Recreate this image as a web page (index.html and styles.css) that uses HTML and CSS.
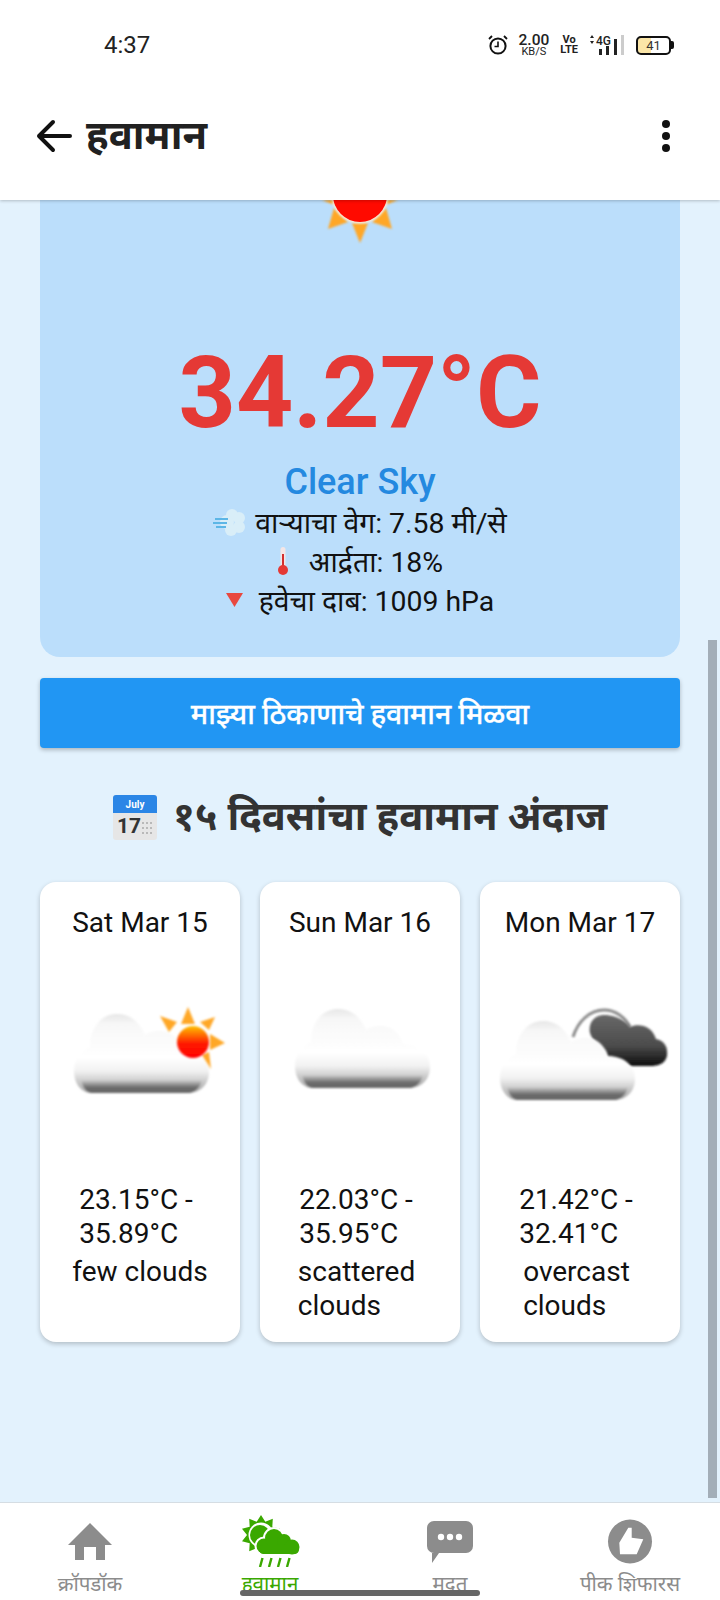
FILE: index.html
```html
<!DOCTYPE html>
<html lang="mr">
<head>
<meta charset="utf-8">
<title>हवामान</title>
<link rel="stylesheet" href="styles.css">
</head>
<body>
<svg class="defs" width="0" height="0">
  <defs>
    <linearGradient id="cloudGrad" x1="0" y1="0" x2="0" y2="1">
      <stop offset="0" stop-color="#e6e6e6"/>
      <stop offset="0.12" stop-color="#f7f7f7"/>
      <stop offset="0.55" stop-color="#ffffff"/>
      <stop offset="0.72" stop-color="#f2f2f2"/>
      <stop offset="0.88" stop-color="#c4c4c4"/>
      <stop offset="1" stop-color="#a8a8a8"/>
    </linearGradient>
    <linearGradient id="cloudBase" x1="0" y1="0" x2="0" y2="1">
      <stop offset="0" stop-color="#777" stop-opacity="0"/>
      <stop offset="0.6" stop-color="#6a6a6a"/>
      <stop offset="1" stop-color="#666"/>
    </linearGradient>
    <linearGradient id="darkGrad" x1="0" y1="0" x2="0" y2="1">
      <stop offset="0" stop-color="#686868"/>
      <stop offset="0.6" stop-color="#4c4c4c"/>
      <stop offset="1" stop-color="#0c0c0c"/>
    </linearGradient>
    <linearGradient id="sunGrad" x1="0" y1="0" x2="0" y2="1">
      <stop offset="0" stop-color="#ffc107"/>
      <stop offset="0.55" stop-color="#ff1a00"/>
      <stop offset="1" stop-color="#ff0000"/>
    </linearGradient>
    <filter id="soft" x="-10%" y="-10%" width="120%" height="120%"><feGaussianBlur stdDeviation="1.2"/></filter>
    <filter id="softer" x="-20%" y="-20%" width="140%" height="140%"><feGaussianBlur stdDeviation="0.8"/></filter>
    <g id="cloudShape">
      <path d="M18 79C6 79 0 68 0 57C0 45 7 37 16 33C16 14 27 0 43 0C56 0 66 8 71 21C77 17 89 15 97 20C103 24 107 30 108 35C123 35 135 44 135 58C135 70 127 79 114 79Z" fill="url(#cloudGrad)"/>
      <path d="M7 66H128C126 74 120 79 114 79H18C13 79 9 74 7 66Z" fill="url(#cloudBase)"/>
    </g>
  </defs>
</svg>

<div class="top">
  <header class="status">
    <span class="time">4:37</span>
    <div class="status-icons">
      <svg class="alarm" width="20" height="20" viewBox="0 0 20 20"><circle cx="10" cy="11" r="7.6" fill="none" stroke="#111" stroke-width="2"/><path d="M10 6.5V11.5H6.5" fill="none" stroke="#111" stroke-width="1.6"/><path d="M1 4L4 1M19 4L16 1" stroke="#111" stroke-width="1.8"/></svg>
      <div class="speed"><span class="speed-num">2.00</span><span class="speed-unit">KB/S</span></div>
      <div class="volte"><span>Vo</span><span>LTE</span></div>
      <svg class="signal" width="38" height="22" viewBox="0 0 38 22"><path d="M3 4L5 1L7 4ZM3 7L5 10L7 7Z" fill="#222"/><text class="net" x="9" y="11">4G</text><rect x="12" y="15" width="3" height="6" fill="#222"/><rect x="19" y="12" width="3" height="9" fill="#222"/><rect x="27" y="5" width="3" height="16" fill="#222"/><rect x="34" y="1" width="3" height="20" fill="#ccc"/></svg>
      <div class="battery"><span class="battery-level">41</span></div>
      <span class="battery-nub"></span>
    </div>
  </header>

  <div class="appbar">
    <svg class="back" width="36" height="34" viewBox="0 0 36 34"><path d="M17 3L3 17L17 31M3 17H34" fill="none" stroke="#111" stroke-width="4" stroke-linecap="round" stroke-linejoin="round"/></svg>
    <h1 class="app-title">हवामान</h1>
    <div class="more"><i></i><i></i><i></i></div>
  </div>
</div>

<main class="content">
  <section class="hero">
    <svg class="hero-sun" width="100" height="45" viewBox="0 0 100 45">
      <g fill="#ffa726" filter="url(#softer)">
        <path d="M42 23L50 43L58 23Z"/>
        <path d="M18 29L24 8L38 22Z"/>
        <path d="M82 29L76 8L62 22Z"/>
        <path d="M12 0H28L22 4Z"/>
        <path d="M88 0H72L78 4Z"/>
      </g>
      <circle cx="50" cy="-5" r="28.500" fill="#ffe9d0" filter="url(#softer)"/>
      <circle cx="50" cy="-5" r="27" fill="#ff0a00"/>
    </svg>
    <div class="temp">34.27°C</div>
    <div class="sky">Clear Sky</div>
    <div class="stat">
      <svg class="ic-wind" width="33" height="28" viewBox="0 0 33 28"><g fill="#d9eef8"><circle cx="19" cy="7" r="6"/><circle cx="26" cy="10" r="6"/><circle cx="26" cy="19" r="6"/><circle cx="18" cy="22" r="6"/><circle cx="14" cy="14" r="7"/></g><path d="M2 11H15M0 15H14M3 19H13" stroke="#5cb6e6" stroke-width="2"/></svg>
      <span>वाऱ्याचा वेग: 7.58 मी/से</span>
    </div>
    <div class="stat">
      <svg class="ic-therm" width="12" height="30" viewBox="0 0 12 30"><rect x="3.5" y="1" width="5" height="22" rx="2.5" fill="#f4e6e6"/><rect x="5" y="8" width="2" height="15" fill="#d32f2f"/><circle cx="6" cy="24" r="5" fill="#e53935"/></svg>
      <span>आर्द्रता: 18%</span>
    </div>
    <div class="stat">
      <svg class="ic-down" width="17" height="14" viewBox="0 0 17 14"><path d="M0 0H17L8.5 14Z" fill="#e8483f"/></svg>
      <span>हवेचा दाब: 1009 hPa</span>
    </div>
  </section>

  <button class="locate">माझ्या ठिकाणाचे हवामान मिळवा</button>

  <h2 class="forecast-title">
    <svg class="ic-cal" width="44" height="45" viewBox="0 0 44 45">
      <rect width="44" height="45" rx="3" fill="#e6e6e6"/>
      <path d="M0 3a3 3 0 0 1 3-3H41a3 3 0 0 1 3 3V18H0Z" fill="#2b86e6"/>
      <text class="cal-month" x="22" y="13">July</text>
      <text class="cal-day" x="4" y="38">17</text>
      <g fill="#aaa"><circle cx="30" cy="28" r="1"/><circle cx="34" cy="28" r="1"/><circle cx="38" cy="28" r="1"/><circle cx="30" cy="33" r="1"/><circle cx="34" cy="33" r="1"/><circle cx="38" cy="33" r="1"/><circle cx="30" cy="38" r="1"/><circle cx="34" cy="38" r="1"/><circle cx="38" cy="38" r="1"/></g>
    </svg>
    <span>१५ दिवसांचा हवामान अंदाज</span>
  </h2>

  <div class="days">
    <article class="day">
      <div class="day-date">Sat Mar 15</div>
      <svg class="day-icon" width="200" height="110" viewBox="0 0 200 110">
        <use href="#cloudShape" x="34" y="13" filter="url(#soft)"/>
        <g fill="#ffa726" filter="url(#softer)">
          <path d="M141 23L148 6L155 23Z"/>
          <path d="M129 31L120 15L137 21Z"/>
          <path d="M169 29L175 16L160 21Z"/>
          <path d="M170 33L185 42L170 49Z"/>
          <path d="M162 54L171 68L169 51Z"/>
        </g>
        <circle cx="153" cy="41" r="16" fill="url(#sunGrad)" filter="url(#softer)"/>
      </svg>
      <div class="day-range">23.15°C -<br>35.89°C</div>
      <div class="day-desc">few clouds</div>
    </article>
    <article class="day">
      <div class="day-date">Sun Mar 16</div>
      <svg class="day-icon" width="200" height="110" viewBox="0 0 200 110">
        <use href="#cloudShape" x="35" y="8" filter="url(#soft)"/>
      </svg>
      <div class="day-range">22.03°C -<br>35.95°C</div>
      <div class="day-desc day-desc-wrap">scattered<br>clouds</div>
    </article>
    <article class="day">
      <div class="day-date">Mon Mar 17</div>
      <svg class="day-icon" width="200" height="110" viewBox="0 0 200 110">
        <path d="M93 36C98 20 110 9 124 9C135 9 145 16 150 26" fill="none" stroke="#8a8a8a" stroke-width="3" filter="url(#softer)"/>
        <path d="M110 32C108 20 116 14 124 14C136 14 146 20 150 26C158 22 172 24 176 38C186 40 188 48 187 55C185 63 178 65 170 65H148C138 60 130 60 128 58C124 50 112 40 110 32Z" fill="url(#darkGrad)" filter="url(#softer)"/>
        <use href="#cloudShape" x="20" y="20" filter="url(#soft)"/>
      </svg>
      <div class="day-range">21.42°C -<br>32.41°C</div>
      <div class="day-desc day-desc-wrap">overcast<br>clouds</div>
    </article>
  </div>
</main>

<div class="scrollbar"></div>

<nav class="tabs">
  <a class="tab">
    <svg class="tab-icon" width="60" height="52" viewBox="0 0 60 52"><path d="M30 8L8 30H15V45H24V32H36V45H45V30H52Z" fill="#8c8c8c"/></svg>
    <span>क्रॉपडॉक</span>
  </a>
  <a class="tab tab-active">
    <svg class="tab-icon" width="60" height="52" viewBox="0 0 60 52">
      <path d="M21 0L25.3 6.7L32.8 3.8L32.3 11.8L40 13.8L35 20L40 26.2L32.3 28.2L32.8 36.2L25.3 33.3L21 40L16.7 33.3L9.2 36.2L9.7 28.2L2 26.2L7 20L2 13.8L9.7 11.8L9.2 3.8L16.7 6.7Z" fill="#3aa800"/>
      <circle cx="21" cy="20" r="12.5" fill="#fff"/>
      <circle cx="20" cy="20" r="10" fill="#3aa800"/>
      <g fill="#fff" stroke="#fff" stroke-width="4">
        <circle cx="24" cy="31" r="7.5"/><circle cx="34" cy="23" r="9"/><circle cx="44" cy="26" r="7"/><circle cx="52" cy="32" r="7.5"/>
        <rect x="19" y="30" width="40" height="9" rx="4.5"/>
      </g>
      <g fill="#3aa800">
        <circle cx="24" cy="31" r="7.5"/><circle cx="34" cy="23" r="9"/><circle cx="44" cy="26" r="7"/><circle cx="52" cy="32" r="7.5"/>
        <rect x="19" y="30" width="40" height="9" rx="4.5"/>
      </g>
      <path d="M20 52L22.5 43M29 52L31.5 43M38 52L40.500 43M47 52L49.500 43" stroke="#3aa800" stroke-width="2.4"/>
    </svg>
    <span>हवामान</span>
  </a>
  <a class="tab">
    <svg class="tab-icon" width="60" height="52" viewBox="0 0 60 52"><path d="M14 6H46A7 7 0 0 1 53 13V31A7 7 0 0 1 46 38H19L12 48V38H14A7 7 0 0 1 7 31V13A7 7 0 0 1 14 6Z" fill="#8c8c8c"/><circle cx="21" cy="22" r="3.2" fill="#fff"/><circle cx="30" cy="22" r="3.2" fill="#fff"/><circle cx="39" cy="22" r="3.2" fill="#fff"/></svg>
    <span>मदत</span>
  </a>
  <a class="tab">
    <svg class="tab-icon" width="60" height="52" viewBox="0 0 60 52"><circle cx="30" cy="26.500" r="22" fill="#8c8c8c"/><path d="M19.300 27.700L28.300 12.700H31.700V22.700L43.300 24.300L36.700 39.300H20Z" fill="#fff"/></svg>
    <span>पीक शिफारस</span>
  </a>
</nav>
<div class="home-indicator"></div>
</body>
</html>
```

FILE: styles.css
```css
* { box-sizing: border-box; }
html, body { margin: 0; padding: 0; }
body {
  position: relative;
  width: 720px;
  height: 1600px;
  overflow: hidden;
  display: flex;
  flex-direction: column;
  background: #e3f2fd;
  color: #111;
  font-family: Roboto, "Noto Sans", "Noto Sans Devanagari", "Lohit Devanagari", FreeSans, sans-serif;
}
.defs { position: absolute; }

.top {
  flex: none;
  background: #fff;
  position: relative;
  z-index: 2;
  box-shadow: 0 1px 3px rgba(0, 0, 0, .22);
}
.status {
  height: 100px;
  display: flex;
  justify-content: space-between;
  align-items: flex-start;
  padding: 33px 46px 0 104px;
}
.time { font-size: 24px; line-height: 24px; color: #222; }
.status-icons { display: flex; align-items: center; height: 24px; }
.alarm { margin-right: 11px; }
.speed { display: flex; flex-direction: column; align-items: center; margin-right: 11px; color: #222; }
.speed-num { font-size: 15.500px; line-height: 14px; font-weight: 500; }
.speed-unit { font-size: 11px; line-height: 10px; }
.volte { display: flex; flex-direction: column; align-items: center; margin-right: 9px; font-size: 11px; line-height: 10px; font-weight: 700; color: #222; }
.signal { margin-right: 11px; }
.net { font-size: 12px; font-weight: 500; fill: #222; }
.battery {
  width: 35px;
  height: 19px;
  border: 2px solid #111;
  border-radius: 5px;
  background: linear-gradient(90deg, #fbe6a8 42%, #fff 42%);
  display: flex;
  align-items: center;
  justify-content: center;
}
.battery-level { font-size: 13px; line-height: 13px; color: #333; }
.battery-nub { width: 3px; height: 8px; background: #111; border-radius: 0 2px 2px 0; }

.appbar {
  height: 100px;
  display: flex;
  align-items: center;
  padding: 0 50px 28px 36px;
}
.app-title { margin: 0 0 0 14px; flex: 1; font-size: 40px; line-height: 50px; font-weight: 700; color: #212121; }
.more { display: flex; flex-direction: column; gap: 4px; }
.more i { width: 8px; height: 8px; border-radius: 50%; background: #111; }

.content { flex: 1; padding: 0 40px; min-height: 0; overflow: hidden; }
.hero {
  height: 457px;
  background: #bbdefb;
  border-radius: 0 0 20px 20px;
  display: flex;
  flex-direction: column;
  align-items: center;
}
.hero-sun { flex: none; }
.temp { margin-top: 89px; font-size: 100px; line-height: 118px; font-weight: 700; color: #e53935; }
.sky { margin-top: 10px; font-size: 36px; line-height: 40px; font-weight: 500; color: #2489e0; }
.stat { display: flex; align-items: center; justify-content: center; height: 39px; font-size: 28.400px; color: #111; }
.ic-wind { margin-right: 9px; }
.ic-therm { margin-right: 20px; }
.ic-down { margin-right: 16px; }

.locate {
  display: block;
  width: 100%;
  height: 70px;
  margin-top: 21px;
  border: 0;
  border-radius: 4px;
  background: #2196f3;
  color: #fff;
  font-family: inherit;
  font-size: 28.400px;
  font-weight: 500;
  -webkit-text-stroke: 0.3px #fff;
  box-shadow: 0 2px 4px rgba(0, 0, 0, .25);
}

.forecast-title {
  margin: 43px 0 0;
  height: 46px;
  display: flex;
  align-items: center;
  justify-content: center;
  font-size: 40px;
  font-weight: 700;
  color: #333;
}
.ic-cal { margin: 6px 16px 0 0; }
.cal-month { font-size: 10px; font-weight: 700; fill: #fff; text-anchor: middle; }
.cal-day { font-size: 21px; font-weight: 700; fill: #333; }

.days { display: flex; gap: 20px; margin-top: 45px; }
.day {
  width: 200px;
  height: 460px;
  background: #fff;
  border-radius: 16px;
  box-shadow: 0 2px 5px rgba(0, 0, 0, .22);
  padding-top: 21px;
  display: flex;
  flex-direction: column;
  align-items: center;
  font-size: 28px;
  line-height: 34px;
}
.day-date { height: 40px; line-height: 40px; white-space: nowrap; }
.day-icon { margin-top: 58px; flex: none; }
.day-range { margin: 72px 8px 0 0; }
.day-desc { margin-top: 4px; }
.day-desc-wrap { margin-right: 7px; }

.scrollbar {
  position: absolute;
  top: 640px;
  left: 708px;
  width: 9px;
  height: 858px;
  background: #a3aeb8;
  z-index: 1;
}

.tabs {
  height: 98px;
  flex: none;
  background: #fff;
  display: grid;
  grid-template-columns: repeat(4, 1fr);
  border-top: 1px solid #d5dde3;
  position: relative;
  z-index: 2;
}
.tab { display: flex; flex-direction: column; align-items: center; padding-top: 12px; font-size: 20.500px; line-height: 24px; color: #8c8c8c; white-space: nowrap; }
.tab-active { color: #3aa800; }
.tab-icon { flex: none; margin-bottom: 5px; }
.home-indicator {
  position: absolute;
  left: 240px;
  top: 1590px;
  width: 240px;
  height: 6px;
  border-radius: 3px;
  background: #666;
  z-index: 3;
}
```
